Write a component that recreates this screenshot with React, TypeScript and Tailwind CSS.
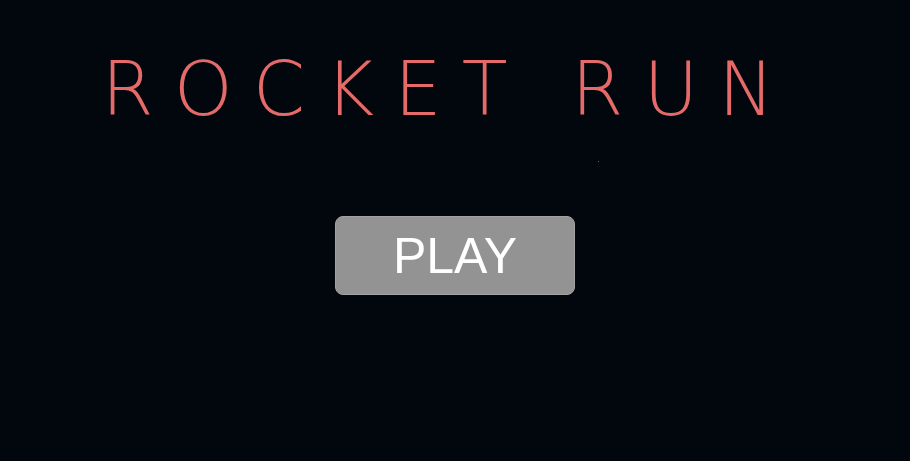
import React from "react";

const App = () => {
  return (
    <main className="relative w-[910px] h-[461px] bg-[#02070d] overflow-hidden flex flex-col items-center">
      <h1
        className="mt-[52px] mr-[14px] text-[75px] leading-none font-extralight tracking-[20px] text-[#e56a69] whitespace-nowrap"
        style={{ fontFamily: '"DejaVu Sans", sans-serif' }}
      >
        ROCKET RUN
      </h1>
      <span className="absolute left-[598px] top-[161px] w-[1px] h-[1px] bg-[#e0302f]" />
      <button
        type="button"
        className="mt-[89px] w-[240px] h-[79px] rounded-[8px] bg-[#939393] border border-[#a3a3a3] flex items-center justify-center text-white text-[50px] leading-none"
        style={{ fontFamily: '"Liberation Sans", Arial, sans-serif' }}
      >
        PLAY
      </button>
    </main>
  );
};

export default App;
